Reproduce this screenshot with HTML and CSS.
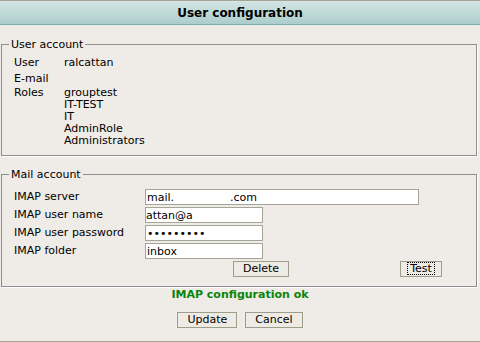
FILE: index.html
```html
<!DOCTYPE html>
<html lang="en">
<head>
<meta charset="utf-8">
<title>User configuration</title>
<link rel="stylesheet" href="styles.css">
</head>
<body>
<div class="page">
  <header class="titlebar"><h1>User configuration</h1></header>

  <fieldset class="box box-user">
    <legend>User account</legend>
    <div class="info">
      <div class="lbl">User</div><div class="val">ralcattan</div>
      <div class="lbl">E-mail</div><div class="val"></div>
      <div class="lbl roles">Roles</div>
      <div class="val roles">grouptest<br>IT-TEST<br>IT<br>AdminRole<br>Administrators</div>
    </div>
  </fieldset>

  <fieldset class="box box-mail">
    <legend>Mail account</legend>
    <div class="form">
      <label class="flbl" for="srv">IMAP server</label>
      <input id="srv" class="fin wide" type="text" value="mail.                .com">
      <label class="flbl" for="usr">IMAP user name</label>
      <input id="usr" class="fin short clip" type="text" value="attan@a">
      <label class="flbl" for="pwd">IMAP user password</label>
      <input id="pwd" class="fin short" type="password" value="123456789">
      <label class="flbl" for="fld">IMAP folder</label>
      <input id="fld" class="fin short" type="text" value="inbox">
      <div></div>
      <div class="actions">
        <button class="btn btn-delete" type="button">Delete</button>
        <button class="btn btn-test" type="button"><span class="focus">Test</span></button>
      </div>
    </div>
  </fieldset>

  <p class="status">IMAP configuration ok</p>

  <div class="footer-actions">
    <button class="btn" type="button">Update</button>
    <button class="btn" type="button">Cancel</button>
  </div>
</div>
</body>
</html>
```

FILE: styles.css
```css
* { box-sizing: border-box; }

body {
  margin: 0;
  background: #efebe6;
  font: 11px/13px "DejaVu Sans", Verdana, sans-serif;
  color: #000;
}

.page {
  height: 342px;
  border-top: 1px solid #a6a493;
  border-bottom: 1px solid #a6a493;
  display: flex;
  flex-direction: column;
}

.titlebar {
  height: 24px;
  background: linear-gradient(#d3e6e4, #abcdcc);
  border-bottom: 1px solid #7aacb0;
  display: flex;
  align-items: center;
  justify-content: center;
  padding-top: 2px;
}

.titlebar h1 {
  margin: 0;
  font-size: 12px;
  font-weight: bold;
  line-height: 21px;
}

.box {
  margin: 13px 3px 0 1px;
  border: 1px solid #8d8d8d;
  box-shadow: 1px 1px 0 #fff;
  padding: 0 8px 8px 7px;
  min-width: 0;
}

.box legend {
  padding: 0 2px;
  line-height: 13px;
}

.box-mail {
  margin-top: 12px;
  padding-bottom: 9px;
}

.info {
  display: grid;
  grid-template-columns: 50px 1fr;
  margin: 4px 0 0 5px;
  line-height: 16px;
}

.info .roles { line-height: 12px; }

.form {
  display: grid;
  grid-template-columns: 131px 1fr;
  row-gap: 2px;
  margin: 8px 0 0 5px;
}

.flbl { line-height: 16px; }

.fin {
  height: 16px;
  border: 1px solid #a5a597;
  background: #fff;
  font: 11px "DejaVu Sans", Verdana, sans-serif;
  padding: 0 1px;
  margin: 0;
  outline: none;
}

.fin.wide { width: 274px; }
.fin.short { width: 118px; }
.fin.clip { padding-left: 0; }

.actions { display: flex; }

.btn {
  height: 16px;
  margin: 0;
  padding: 0 9px;
  border: 1px solid #9d9d8c;
  background: #eeebe5;
  font: 11px/14px "DejaVu Sans", Verdana, sans-serif;
  color: #000;
}

.btn-delete { margin-left: 88px; }
.btn-test { margin-left: 111px; padding: 0 6px; }

.focus {
  display: inline-block;
  border: 1px dotted #000;
  padding: 0 2px;
  line-height: 11px;
}

.status {
  margin: 1px 0 0;
  text-align: center;
  font-weight: bold;
  color: #0a850a;
}

.footer-actions {
  display: flex;
  justify-content: center;
  gap: 8px;
  margin-top: 11px;
}
```
